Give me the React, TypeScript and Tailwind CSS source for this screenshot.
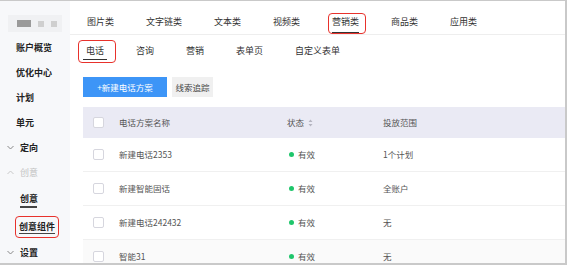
import React from 'react';

const font = { fontFamily: '"Noto Sans CJK SC", "Noto Sans", sans-serif' };

const topTabs = ['图片类', '文字链类', '文本类', '视频类', '营销类', '商品类', '应用类'];
const subTabs = ['电话', '咨询', '营销', '表单页', '自定义表单'];

const rows = [
  { name: '新建电话2353', scope: '1个计划' },
  { name: '新建智能固话', scope: '全账户' },
  { name: '新建电话242432', scope: '无' },
  { name: '智能31', scope: '无' },
];

function Chevron({ up, className }: { up?: boolean; className?: string }) {
  return (
    <svg width="7" height="5" viewBox="0 0 7 5" className={className}>
      <polyline
        points={up ? '0.5,4 3.5,1 6.5,4' : '0.5,1 3.5,4 6.5,1'}
        fill="none"
        stroke="currentColor"
        strokeWidth="1"
      />
    </svg>
  );
}

function Checkbox() {
  return <div className="w-[11px] h-[11px] bg-white border border-[#d6d6de] rounded-[2px]" />;
}

function Sidebar() {
  return (
    <aside className="w-[70px] shrink-0 bg-[#f7f8fa] flex flex-col text-[9px] text-[#222] font-semibold">
      {/* blurred logo */}
      <div className="h-[34px] shrink-0 pt-[14px] pl-[8px]">
        <div className="w-[54px] h-[17px] bg-[#f0f1f3] flex items-center gap-[7px] pl-[9px] blur-[0.6px]">
          <div className="w-[14px] h-[7px] bg-[#9a9a9a]" />
          <div className="w-[6px] h-[6px] bg-[#cfcfcf]" />
          <div className="w-[6px] h-[6px] bg-[#cfcfcf]" />
        </div>
      </div>
      <div className="h-[25px] shrink-0 flex items-center pl-[16px]">账户概览</div>
      <div className="h-[25px] shrink-0 flex items-center pl-[16px]">优化中心</div>
      <div className="h-[25px] shrink-0 flex items-center pl-[16px]">计划</div>
      <div className="h-[25px] shrink-0 flex items-center pl-[16px]">单元</div>
      <div className="h-[25px] shrink-0 flex items-center pl-[7px] gap-[6px]">
        <Chevron className="text-[#888]" />
        <span>定向</span>
      </div>
      <div className="h-[25px] shrink-0 flex items-center pl-[7px] gap-[6px] text-[#c2c2c2] font-normal">
        <Chevron up className="text-[#c8c8c8]" />
        <span>创意</span>
      </div>
      <div className="h-[27px] shrink-0 flex flex-col items-start justify-center pl-[20px] pt-[3px]">
        <span className="leading-[13px]">创意</span>
        <div className="w-[17px] h-[1.5px] bg-[#444] mt-[1px]" />
      </div>
      <div className="h-[28px] shrink-0 flex items-center pl-[15px]">
        <div className="relative px-[4px] pt-[4px] pb-[4px] mt-[2px]">
          <span className="border-b-[1.5px] border-[#444] leading-[13px] block">创意组件</span>
          <div className="absolute inset-0 border-[1.5px] border-[#e8322c] rounded-[4px]" />
        </div>
      </div>
      <div className="h-[25px] shrink-0 flex items-center pl-[7px] gap-[6px]">
        <Chevron className="text-[#888]" />
        <span>设置</span>
      </div>
    </aside>
  );
}

function Main() {
  return (
    <main className="flex-1 min-w-0 flex flex-col bg-white text-[#333] overflow-hidden">
      {/* top category tabs */}
      <div className="h-[34px] shrink-0 border-b border-[#eeeeee] flex items-end pl-[17px] gap-[32px] text-[9px]">
        {topTabs.map((t) => (
          <div key={t} className="relative h-[19px] flex items-start">
            <span className={t === '营销类' ? 'block border-b-[1.5px] border-[#333] leading-[13px] pb-[4px]' : 'block leading-[13px]'}>
              {t}
            </span>
            {t === '营销类' && (
              <div className="absolute left-[-4px] right-[-7px] top-[-2px] bottom-[0px] border-[1.5px] border-[#e8322c] rounded-[4px]" />
            )}
          </div>
        ))}
      </div>

      {/* sub tabs */}
      <div className="h-[30px] shrink-0 flex items-start pl-[16px] gap-[32px] text-[9px] pt-[9px]">
        {subTabs.map((t) => (
          <div key={t} className="relative">
            <span className={t === '电话' ? 'block border-b-[1.5px] border-[#333] px-[3px] -mx-[3px] leading-[14px] pb-[1px]' : 'block leading-[14px] pb-[1px]'}>
              {t}
            </span>
            {t === '电话' && (
              <div className="absolute left-[-8px] right-[-12px] top-[-4px] bottom-[-3px] border-[1.5px] border-[#e8322c] rounded-[4px]" />
            )}
          </div>
        ))}
      </div>

      {/* buttons */}
      <div className="shrink-0 flex items-center gap-[5px] pl-[13px] mt-[12px] text-[8.5px]">
        <button className="h-[20px] w-[84px] bg-[#3d95f7] text-white">+新建电话方案</button>
        <button className="h-[20px] w-[41px] bg-[#f0f0f0] text-[#444]">线索追踪</button>
      </div>

      {/* table */}
      <div className="shrink-0 ml-[13px] mt-[10px] text-[8.5px] text-[#555]">
        <div className="h-[31px] bg-[#eaeaf4] flex items-center">
          <div className="w-[36px] pl-[10px]"><Checkbox /></div>
          <div className="w-[168px]">电话方案名称</div>
          <div className="w-[96px] flex items-center gap-[4px]">
            <span>状态</span>
            <svg width="5" height="8" viewBox="0 0 5 8">
              <path d="M2.5 0.5 L4.5 3 L0.5 3 Z M2.5 7.5 L4.5 5 L0.5 5 Z" fill="#b5b5c0" />
            </svg>
          </div>
          <div>投放范围</div>
        </div>
        {rows.map((r, i) => (
          <div
            key={r.name}
            className={
              'h-[34px] flex items-center border-b border-[#f0f0f0] ' + (i === 3 ? 'bg-[#fafafa]' : 'bg-white')
            }
          >
            <div className="w-[36px] pl-[10px]"><Checkbox /></div>
            <div className="w-[168px]">{r.name}</div>
            <div className="w-[96px] flex items-center gap-[4px] pl-[2px]">
              <span className="w-[5px] h-[5px] rounded-full bg-[#1fc66b]" />
              <span>有效</span>
            </div>
            <div>{r.scope}</div>
          </div>
        ))}
      </div>
    </main>
  );
}

export default function App() {
  return (
    <div
      style={font}
      className="w-[567px] h-[265px] overflow-hidden flex border-t border-r-2 border-b-2 border-[#c9c9c9] bg-white"
    >
      <Sidebar />
      <Main />
    </div>
  );
}
